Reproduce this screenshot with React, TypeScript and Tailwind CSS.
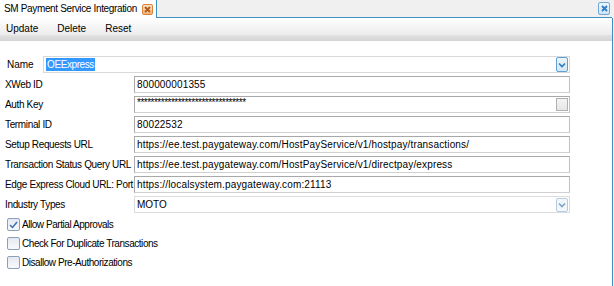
import React from 'react';

const fields = [
  { label: 'XWeb ID', value: '800000001355' },
  { label: 'Auth Key', value: '********************************', secret: true },
  { label: 'Terminal ID', value: '80022532' },
  { label: 'Setup Requests URL', value: 'https://ee.test.paygateway.com/HostPayService/v1/hostpay/transactions/' },
  { label: 'Transaction Status Query URL', value: 'https://ee.test.paygateway.com/HostPayService/v1/directpay/express' },
  { label: 'Edge Express Cloud URL: Port', value: 'https://localsystem.paygateway.com:21113' },
];

const options = [
  { label: 'Allow Partial Approvals', checked: true },
  { label: 'Check For Duplicate Transactions', checked: false },
  { label: 'Disallow Pre-Authorizations', checked: false },
];

function Chevron({ color }: { color: string }) {
  return (
    <svg width="8" height="6" viewBox="0 0 8 6">
      <path d="M1 1.5 L4 4.5 L7 1.5" fill="none" stroke={color} strokeWidth="1.6" />
    </svg>
  );
}

function CloseGlyph({ color }: { color: string }) {
  return (
    <svg width="7" height="7" viewBox="0 0 7 7">
      <path d="M1 1 L6 6 M6 1 L1 6" stroke={color} strokeWidth="1.8" />
    </svg>
  );
}

export default function App() {
  return (
    <div className="w-[614px] h-[286px] bg-[#f0f0f0] overflow-hidden flex flex-col text-[10px] text-black font-['Liberation_Sans',Arial,sans-serif]">
      {/* Tab strip */}
      <div className="h-[18px] flex shrink-0">
        <div className="w-[157px] bg-white border-r border-[#3c8fc8] flex items-center pl-[4px] pr-[3px] justify-between whitespace-nowrap">
          <span className="leading-none tracking-[-0.35px]">SM Payment Service Integration</span>
          <div className="w-[11px] h-[11px] border border-[#d7833a] rounded-[2px] bg-gradient-to-b from-[#fde3c8] to-[#f5b57a] flex items-center justify-center">
            <CloseGlyph color="#b25a1c" />
          </div>
        </div>
        <div className="flex-1 flex justify-end items-start pt-[2px] pr-[2px] border-b border-[#3c8fc8]">
          <div className="w-[12px] h-[13px] border border-[#6fa7d6] rounded-[2px] bg-gradient-to-b from-[#eef6fc] to-[#cfe4f5] flex items-center justify-center">
            <CloseGlyph color="#2d7cc4" />
          </div>
        </div>
        <div className="w-[2px]" />
      </div>

      {/* Panel */}
      <div className="flex-1 flex">
        <div className="flex-1 bg-white border-r border-[#3c8fc8] flex flex-col">
          {/* Toolbar */}
          <div className="h-[23px] flex flex-col shrink-0">
            <div className="h-[17px] bg-gradient-to-b from-[#ffffff] to-[#ececec] flex items-center gap-[19px] pl-[6px] pt-[4px]">
              <span>Update</span>
              <span>Delete</span>
              <span>Reset</span>
            </div>
            <div className="h-[6px] bg-gradient-to-b from-[#e2e2e2] to-[#d4d4d4]" />
          </div>

          {/* Form */}
          <div className="flex flex-col pt-[15px] pl-[5px] pr-[42px] gap-[3px]">
            <div className="h-[17px] flex items-center">
              <span className="w-[38px] pl-[2px]">Name</span>
              <div className="flex-1 h-[17px] border border-[#d9d9d9] bg-white flex items-center pl-[2px] pr-[1px]">
                <span className="bg-[#3399ff] text-white px-[1px] leading-[13px] tracking-[-0.4px]">OEExpress</span>
                <div className="ml-auto w-[12px] h-[15px] border border-[#5fa0d6] rounded-[2px] bg-gradient-to-b from-[#eaf4fc] to-[#d4e8f7] flex items-center justify-center">
                  <Chevron color="#2e7cc0" />
                </div>
              </div>
            </div>

            {fields.map((f) => (
              <div key={f.label} className="h-[17px] flex items-center">
                <span className="w-[129px] whitespace-nowrap tracking-[-0.35px]">{f.label}</span>
                <div className="flex-1 h-[17px] border border-[#a9a9a9] border-b-[#d0d0d0] border-r-[#c0c0c0] bg-white flex items-center pl-[2px] pr-[1px] whitespace-nowrap overflow-hidden">
                  <span className={f.secret ? 'self-start pt-[1px] tracking-[-0.5px] leading-[10px]' : 'tracking-[0.15px]'}>{f.value}</span>
                  {f.secret && (
                    <div className="ml-auto w-[12px] h-[13px] border border-[#b0b0b0] bg-gradient-to-b from-[#f4f4f4] to-[#e6e6e6]" />
                  )}
                </div>
              </div>
            ))}

            <div className="h-[17px] flex items-center">
              <span className="w-[129px] tracking-[-0.35px]">Industry Types</span>
              <div className="flex-1 h-[17px] border border-[#dcdcdc] bg-white flex items-center pl-[2px] pr-[1px]">
                <span>MOTO</span>
                <div className="ml-auto w-[12px] h-[14px] border border-[#b7cbe0] rounded-[2px] bg-[#f2f7fb] flex items-center justify-center">
                  <Chevron color="#7fa3c6" />
                </div>
              </div>
            </div>

            <div className="flex flex-col gap-[6px] pt-[2px] pl-[2px]">
              {options.map((o) => (
                <label key={o.label} className="h-[13px] flex items-center gap-[2px]">
                  <span className="w-[13px] h-[13px] border border-[#8c9fb8] rounded-[2px] bg-gradient-to-b from-[#e4eaf1] to-[#f8f9fb] flex items-center justify-center">
                    {o.checked && (
                      <svg width="9" height="8" viewBox="0 0 9 8">
                        <path d="M1 4 L3.5 6.5 L8 1" fill="none" stroke="#3d6fb0" strokeWidth="1.5" />
                      </svg>
                    )}
                  </span>
                  <span className="tracking-[-0.45px]">{o.label}</span>
                </label>
              ))}
            </div>
          </div>
        </div>
        <div className="w-[1px]" />
      </div>
    </div>
  );
}
